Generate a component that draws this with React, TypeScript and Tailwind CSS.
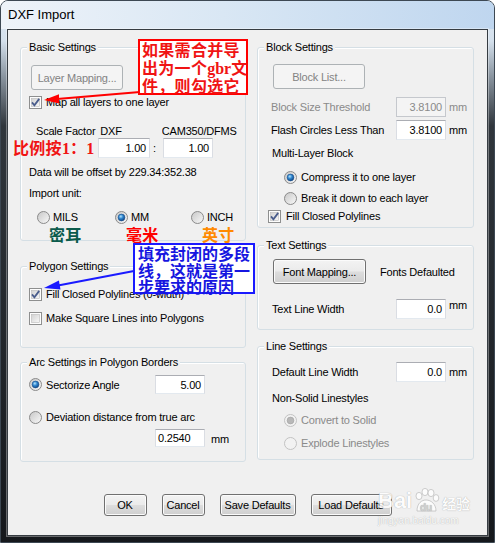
import React from 'react';

const cjk = "font-['Noto_Sans_CJK_SC',sans-serif] font-bold tracking-[0.3px]";
const serif = "font-['Liberation_Serif',serif] font-bold tracking-normal";

function Radio({ on = false, off = false }: { on?: boolean; off?: boolean }) {
  return (
    <svg width="13" height="13" viewBox="0 0 13 13" className="shrink-0">
      <defs>
        <linearGradient id="rg" x1="0" y1="0" x2="1" y2="1">
          <stop offset="0" stopColor="#c6c6c6" />
          <stop offset="1" stopColor="#fafafa" />
        </linearGradient>
        <radialGradient id="rdot" cx="0.4" cy="0.35" r="0.7">
          <stop offset="0" stopColor="#b4e4fc" />
          <stop offset="0.45" stopColor="#2f86cf" />
          <stop offset="1" stopColor="#0c3f7c" />
        </radialGradient>
      </defs>
      <circle cx="6.5" cy="6.5" r="6" fill={off ? '#f2f2f2' : 'url(#rg)'} stroke={off ? '#c2c2c2' : '#8a8a8a'} />
      {on && (
        <circle
          cx="6.5"
          cy="6.5"
          r="3.4"
          fill={off ? '#b8b8b8' : 'url(#rdot)'}
          stroke={off ? '#a0a0a0' : '#1b4f8c'}
          strokeWidth="0.6"
        />
      )}
    </svg>
  );
}

function Check({ on = false }: { on?: boolean }) {
  return (
    <svg width="13" height="13" viewBox="0 0 13 13" className="shrink-0">
      <defs>
        <linearGradient id="cg" x1="0" y1="0" x2="1" y2="1">
          <stop offset="0" stopColor="#d2d2d2" />
          <stop offset="1" stopColor="#f8f8f8" />
        </linearGradient>
      </defs>
      <rect x="0.5" y="0.5" width="12" height="12" fill="#fdfdfd" stroke="#8e8f8f" />
      <rect x="2.5" y="2.5" width="8" height="8" fill="url(#cg)" stroke="#b9b9b9" strokeWidth="0.6" />
      {on && <path d="M3 6.4 L5.4 9.3 L10.2 2.9" fill="none" stroke="#4a5d8c" strokeWidth="1.8" />}
    </svg>
  );
}

function Btn({ children, className = '', disabled = false }: { children: React.ReactNode; className?: string; disabled?: boolean }) {
  const look = disabled
    ? 'border-[#adb2b5] bg-[#f4f4f4] text-[#838383]'
    : 'border-[#707070] text-black bg-[linear-gradient(180deg,#f3f3f3_0%,#ebebeb_48%,#dddddd_52%,#cfcfcf_100%)] shadow-[inset_0_0_0_1px_#fbfbfb]';
  return (
    <button type="button" className={`flex items-center justify-center rounded-[3px] border ${look} ${className}`}>
      {children}
    </button>
  );
}

function Field({ value, className = '', disabled = false, left = false }: { value: string; className?: string; disabled?: boolean; left?: boolean }) {
  const look = disabled
    ? 'border-[#c5c8cd] bg-[#f4f4f4] text-[#8a8a8a]'
    : 'border-[#abadb3] border-b-[#e3e9ef] border-x-[#dadde3] bg-white text-black';
  return (
    <div className={`flex shrink-0 items-center border ${look} ${left ? 'justify-start pl-[2px]' : 'justify-end pr-[3px]'} ${className}`}>
      {value}
    </div>
  );
}

function Group({ title, className = '', children }: { title: string; className?: string; children: React.ReactNode }) {
  return (
    <div className={`relative rounded-[3px] border border-[#d5dfe5] shadow-[inset_1px_1px_0_#ffffff] ${className}`}>
      <span className="absolute -top-[8px] left-[6px] bg-[#f0f0f0] px-[2px] leading-[14px]">{title}</span>
      {children}
    </div>
  );
}

export default function App() {
  return (
    <div className="relative h-[543px] w-[495px] overflow-hidden rounded-t-[8px] border border-[#3d4853] bg-[linear-gradient(180deg,#dfe9f4_0px,#d4e0ec_40px,#8b96a1_75px,#30363c_125px,#15181c_100%)] font-['Liberation_Sans',Arial,sans-serif] text-[11px] leading-[14px] tracking-[-0.2px] text-black">
      <div className="flex h-[28px] items-center bg-[linear-gradient(90deg,#eef3f9_0%,#d9e7f4_45%,#bfd6ef_100%)] pl-[7px] text-[13px] tracking-normal">
        DXF Import
      </div>

      <div className="ml-[6px] h-[507px] w-[481px] border border-[#363c42] bg-[#f0f0f0] px-[12px] pt-[17px] shadow-[0_0_0_1px_rgba(255,255,255,0.35)]">
        <div className="flex items-start gap-[11px]">
          {/* left column */}
          <div className="flex w-[226px] flex-col">
            <Group title="Basic Settings" className="h-[194px]">
              <div className="ml-[10px] mt-[17px]">
                <Btn disabled className="h-[25px] w-[92px]">Layer Mapping...</Btn>
              </div>
              <div className="ml-[8px] mt-[5px] flex h-[14px] items-center gap-[4px]">
                <Check on />
                <span>Map all layers to one layer</span>
              </div>
              <div className="ml-[15px] mt-[15px] flex h-[14px] items-center whitespace-nowrap">
                <span className="w-[127px]">
                  Scale Factor<span className="ml-[5px]">DXF</span>
                </span>
                <span className="w-[84px] overflow-hidden">CAM350/DFMS</span>
              </div>
              <div className="flex h-[20px] items-center">
                <span className={`-ml-[8px] w-[85px] whitespace-nowrap text-[16px] leading-[18px] text-[#f01414] ${cjk}`}>
                  比例按<span className={serif}>1</span>：<span className={serif}>1</span>
                </span>
                <Field value="1.00" className="h-[20px] w-[52px]" />
                <span className="w-[13px] pl-[3px]">:</span>
                <Field value="1.00" className="h-[20px] w-[50px]" />
              </div>
              <div className="ml-[8px] mt-[7px] h-[14px]">Data will be offset by 229.34:352.38</div>
              <div className="ml-[8px] mt-[7px] h-[14px]">Import unit:</div>
              <div className="ml-[16px] mt-[10px] flex h-[14px] items-center">
                <div className="flex w-[78px] items-center gap-[3px]">
                  <Radio />
                  <span>MILS</span>
                </div>
                <div className="flex w-[76px] items-center gap-[3px]">
                  <Radio on />
                  <span>MM</span>
                </div>
                <div className="flex items-center gap-[3px]">
                  <Radio />
                  <span>INCH</span>
                </div>
              </div>
              <div className={`ml-[28px] mt-[2px] flex h-[16px] items-center text-[16px] leading-[16px] ${cjk}`}>
                <span className="w-[77px] text-[#0b5b4c]">密耳</span>
                <span className="w-[76px] text-[#ff0000]">毫米</span>
                <span className="text-[#ff8a00]">英寸</span>
              </div>
            </Group>

            <Group title="Polygon Settings" className="mt-[25px] h-[82px]">
              <div className="ml-[8px] mt-[20px] flex h-[14px] items-center gap-[4px]">
                <Check on />
                <span>Fill Closed Polylines (0-width)</span>
              </div>
              <div className="ml-[8px] mt-[10px] flex h-[14px] items-center gap-[4px]">
                <Check />
                <span>Make Square Lines into Polygons</span>
              </div>
            </Group>

            <Group title="Arc Settings in Polygon Borders" className="mt-[14px] h-[100px]">
              <div className="ml-[8px] mt-[12px] flex h-[19px] items-center">
                <div className="flex w-[126px] items-center gap-[4px]">
                  <Radio on />
                  <span>Sectorize Angle</span>
                </div>
                <Field value="5.00" className="h-[19px] w-[50px]" />
              </div>
              <div className="ml-[8px] mt-[16px] flex h-[14px] items-center gap-[4px]">
                <Radio />
                <span>Deviation distance from true arc</span>
              </div>
              <div className="ml-[134px] mt-[5px] flex h-[18px] items-center">
                <Field value="0.2540" left className="h-[18px] w-[50px]" />
                <span className="ml-[6px] mt-[2px]">mm</span>
              </div>
            </Group>
          </div>

          {/* right column */}
          <div className="flex w-[217px] flex-col">
            <Group title="Block Settings" className="h-[181px]">
              <div className="ml-[15px] mt-[16px]">
                <Btn disabled className="h-[25px] w-[92px]">Block List...</Btn>
              </div>
              <div className="ml-[13px] mt-[8px] flex h-[20px] items-center text-[#8a8a8a]">
                <span className="w-[125px]">Block Size Threshold</span>
                <Field value="3.8100" disabled className="h-[20px] w-[50px]" />
                <span className="ml-[3px]">mm</span>
              </div>
              <div className="ml-[13px] mt-[3px] flex h-[20px] items-center">
                <span className="w-[125px]">Flash Circles Less Than</span>
                <Field value="3.8100" className="h-[20px] w-[50px]" />
                <span className="ml-[3px]">mm</span>
              </div>
              <div className="ml-[14px] mt-[6px] h-[14px]">Multi-Layer Block</div>
              <div className="ml-[26px] mt-[10px] flex h-[14px] items-center gap-[4px]">
                <Radio on />
                <span>Compress it to one layer</span>
              </div>
              <div className="ml-[26px] mt-[7px] flex h-[14px] items-center gap-[4px]">
                <Radio />
                <span>Break it down to each layer</span>
              </div>
              <div className="ml-[10px] mt-[4px] flex h-[14px] items-center gap-[5px]">
                <Check on />
                <span>Fill Closed Polylines</span>
              </div>
            </Group>

            <Group title="Text Settings" className="mt-[17px] h-[85px]">
              <div className="ml-[15px] mt-[13px] flex h-[25px] items-center">
                <Btn className="h-[25px] w-[93px]">Font Mapping...</Btn>
                <span className="ml-[14px]">Fonts Defaulted</span>
              </div>
              <div className="ml-[14px] mt-[15px] flex h-[20px] items-center">
                <span className="w-[124px]">Text Line Width</span>
                <Field value="0.0" className="h-[20px] w-[50px]" />
                <span className="ml-[3px] self-start leading-[12px]">mm</span>
              </div>
            </Group>

            <Group title="Line Settings" className="mt-[16px] h-[114px]">
              <div className="ml-[14px] mt-[15px] flex h-[20px] items-center">
                <span className="w-[124px]">Default Line Width</span>
                <Field value="0.0" className="h-[20px] w-[50px]" />
                <span className="ml-[3px]">mm</span>
              </div>
              <div className="ml-[14px] mt-[9px] h-[14px]">Non-Solid Linestyles</div>
              <div className="ml-[26px] mt-[8px] flex h-[14px] items-center gap-[4px] text-[#8a8a8a]">
                <Radio on off />
                <span>Convert to Solid</span>
              </div>
              <div className="ml-[26px] mt-[9px] flex h-[14px] items-center gap-[4px] text-[#8a8a8a]">
                <Radio off />
                <span>Explode Linestyles</span>
              </div>
            </Group>
          </div>
        </div>

        <div className="mt-[32px] flex justify-center gap-[15px]">
          <Btn className="h-[22px] w-[43px]">OK</Btn>
          <Btn className="h-[22px] w-[43px]">Cancel</Btn>
          <Btn className="h-[22px] w-[76px]">Save Defaults</Btn>
          <Btn className="h-[22px] w-[81px]">Load Defaults</Btn>
        </div>
      </div>

      {/* annotations drawn over the dialog */}
      <div className={`absolute left-[137px] top-[38px] h-[56px] w-[110px] whitespace-nowrap border-2 border-[#ff0000] bg-white pl-[2px] text-[16px] leading-[17.5px] text-[#f01414] ${cjk}`}>
        <div>如果需合并导</div>
        <div>
          出为一个<span className={serif}>gbr</span>文
        </div>
        <div>件，则勾选它</div>
      </div>
      <div className={`absolute left-[132px] top-[242px] h-[51px] w-[122px] whitespace-nowrap border-2 border-[#1a1aff] bg-white pl-[3px] text-[16px] leading-[16.5px] tracking-normal text-[#1616e0] ${cjk}`}>
        <div>填充封闭的多段</div>
        <div>线，这就是第一</div>
        <div>步要求的原因</div>
      </div>
      <svg className="pointer-events-none absolute left-0 top-0" width="495" height="543">
        <line x1="139" y1="91" x2="56" y2="98" stroke="#ff0000" strokeWidth="2" />
        <polygon points="43,99 58,93.2 58,102.6" fill="#ff0000" />
        <line x1="133" y1="270" x2="57" y2="284.5" stroke="#1a1aff" strokeWidth="2" />
        <polygon points="43,287 57.9,279.6 59.5,288.4" fill="#1a1aff" />
      </svg>

      {/* watermark */}
      <div className="pointer-events-none absolute left-[377px] top-[486px] text-white opacity-80 [text-shadow:0_0_1px_#8a8a8a]">
        <div className="flex items-end">
          <span className="text-[22px] font-bold leading-[24px] tracking-normal">Bai</span>
          <svg width="28" height="28" viewBox="0 0 28 28" className="-mb-[2px]">
            <g fill="#ffffff" stroke="#a0a0a0" strokeWidth="0.6">
              <ellipse cx="7" cy="9" rx="3" ry="3.6" />
              <ellipse cx="13" cy="5" rx="3" ry="3.6" />
              <ellipse cx="19" cy="6" rx="3" ry="3.6" />
              <ellipse cx="24" cy="11" rx="2.8" ry="3.4" />
              <path d="M5 24 C5 16 10 13 14 13 C19 13 24 17 24 24 Z" />
            </g>
            <text x="8" y="24" fontSize="10" fontWeight="bold" fill="#c8c8c8">du</text>
          </svg>
          <span className="ml-[2px] font-['Noto_Sans_CJK_SC',sans-serif] text-[14px] font-bold leading-[20px]">经验</span>
        </div>
        <div className="mt-[3px] text-[10px] leading-[10px] tracking-normal">jingyan.baidu.com</div>
      </div>
    </div>
  );
}
